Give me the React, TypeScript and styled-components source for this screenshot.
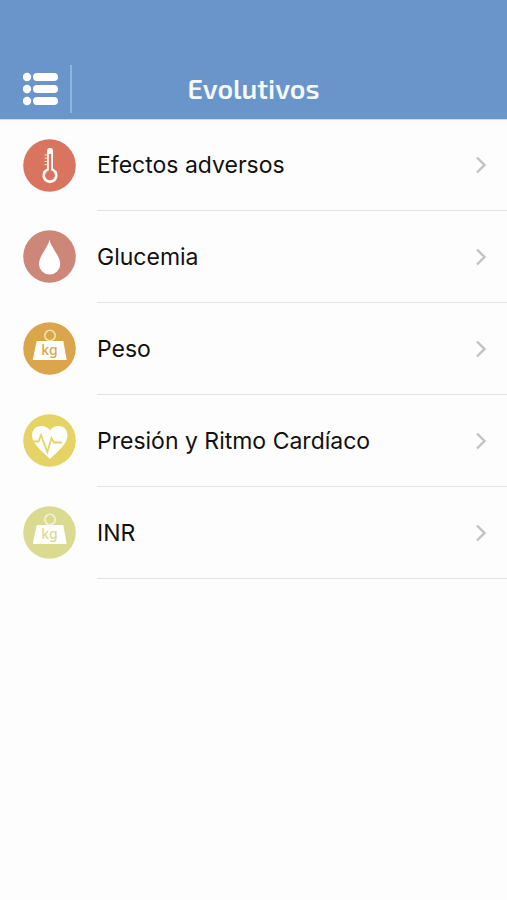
import React from "react";
import styled, { createGlobalStyle } from "styled-components";

const GlobalStyle = createGlobalStyle`
  *, *::before, *::after { box-sizing: border-box; }
  body {
    margin: 0;
    background: #fdfdfd;
    color: #111;
    font-family: Inter, "Liberation Sans", sans-serif;
  }
`;

const Header = styled.header`
  display: grid;
  grid-template-columns: 72px 1fr 72px;
  align-items: center;
  padding-top: 60px;
  padding-bottom: 2px;
  height: 120px;
  background: #6a95cb;
  border-bottom: 1px solid #c9dbee;
`;

const MenuButton = styled.button`
  display: flex;
  align-items: center;
  justify-content: space-between;
  height: 48px;
  padding: 0 0 0 23px;
  border: 0;
  border-right: 2px solid #8fb4e0;
  background: none;
  cursor: pointer;
`;

const Title = styled.h1`
  margin: 0;
  padding-bottom: 2px;
  color: #f4faff;
  font-family: "Exo 2", "Noto Sans", sans-serif;
  font-size: 27px;
  font-weight: 600;
  line-height: 32px;
  text-align: center;
`;

const List = styled.ul`
  margin: 0;
  padding: 0;
  list-style: none;
`;

const RowLink = styled.a`
  display: flex;
  align-items: stretch;
  gap: 21px;
  height: 92px;
  padding-left: 23px;
  color: inherit;
  text-decoration: none;

  li:first-child > & {
    height: 91px;
  }
`;

const Badge = styled.svg`
  flex: none;
  align-self: center;
  width: 53px;
  height: 53px;
  margin-bottom: 1px;
`;

const RowBody = styled.span`
  display: flex;
  flex: 1;
  align-items: center;
  justify-content: space-between;
  padding-right: 19px;
  border-bottom: 1px solid #e4e4e4;
`;

const Label = styled.span`
  font-size: 23px;
  line-height: 32px;
`;

function MenuIcon() {
  return (
    <svg width="36" height="34" viewBox="0 0 36 34" fill="#fff" aria-hidden="true">
      {[5, 17, 29].map((y) => (
        <g key={y}>
          <circle cx="4" cy={y} r="4.2" />
          <rect x="10" y={y - 4} width="25" height="8" rx="4" />
        </g>
      ))}
    </svg>
  );
}

function Chevron() {
  return (
    <svg width="14" height="20" viewBox="0 0 14 20" fill="none" stroke="#c2c2c4" strokeWidth="2.4" aria-hidden="true">
      <path d="M3 2.5 10.5 10 3 17.5" />
    </svg>
  );
}

function Thermometer({ color }: { color: string }) {
  return (
    <>
      <path d="M24 12a3 3 0 0 1 6 0v17.6a7.6 7.6 0 1 1-6 0z" fill="#fff" />
      <path d="M25.8 15h2.4v16.6a5 5 0 1 1-2.4 0z" fill={color} />
      <path d="M21.5 16H24M21.5 19.2H24M21.5 22.4H24M21.5 25.6H24" stroke="#fff" strokeOpacity="0.8" strokeWidth="1" />
    </>
  );
}

function Drop() {
  return <path d="M26.5 9.8C28 18 37.2 25.5 37.2 34.2A10.6 10.2 0 0 1 16 34.2C16 25.500 25 18 26.5 9.8z" fill="#fff" />;
}

function Weight({ color }: { color: string }) {
  return (
    <>
      <circle cx="27" cy="13.5" r="5.2" fill="none" stroke="#fff" strokeOpacity="0.65" strokeWidth="1.6" />
      <path d="M13.7 19H40.3L43.7 38H9.7z" fill="#fff" />
      <text x="26.5" y="32.5" fill={color} fontFamily="Noto Sans, sans-serif" fontSize="14" fontWeight="500" textAnchor="middle">
        kg
      </text>
    </>
  );
}

function Heart({ color }: { color: string }) {
  return (
    <>
      <path d="M27 16.5C31 9.5 44.5 10 44.5 21.500C44.5 30 35 37 27 45C19 37 9 30 9 21.500C9 10 23 9.5 27 16.5z" fill="#fff" />
      <path d="M8 27.500H15.500L18 21L24.300 38L28.500 24L31 28.500H39" fill="none" stroke={color} strokeWidth="1.8" />
    </>
  );
}

const items = [
  { id: "efectos", label: "Efectos adversos", color: "#d9755f", Icon: Thermometer },
  { id: "glucemia", label: "Glucemia", color: "#cd8778", Icon: Drop },
  { id: "peso", label: "Peso", color: "#dba54b", Icon: Weight },
  { id: "presion", label: "Presión y Ritmo Cardíaco", color: "#e5d465", Icon: Heart },
  { id: "inr", label: "INR", color: "#dadb90", Icon: Weight },
];

export default function App() {
  return (
    <>
      <GlobalStyle />
      <Header>
        <MenuButton type="button" aria-label="Menú">
          <MenuIcon />
        </MenuButton>
        <Title>Evolutivos</Title>
      </Header>
      <main>
        <List>
          {items.map(({ id, label, color, Icon }) => (
            <li key={id}>
              <RowLink href={`#${id}`}>
                <Badge viewBox="0 0 53 53" aria-hidden="true">
                  <circle cx="26.5" cy="26.5" r="26.3" fill={color} />
                  <Icon color={color} />
                </Badge>
                <RowBody>
                  <Label>{label}</Label>
                  <Chevron />
                </RowBody>
              </RowLink>
            </li>
          ))}
        </List>
      </main>
    </>
  );
}
